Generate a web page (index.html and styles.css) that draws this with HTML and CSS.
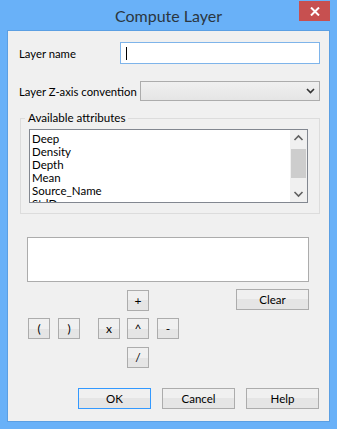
FILE: index.html
```html
<!DOCTYPE html>
<html lang="en">
<head>
    <meta charset="UTF-8">
    <meta name="viewport" content="width=device-width, initial-scale=1.0">
    <link rel="stylesheet" href="styles.css">
</head>
<body>
    <div class="window">
        <div class="titlebar">
            <div class="title">Compute Layer</div>
            <div class="close">
                <svg width="10" height="9" viewBox="0 0 10 9"><path d="M1 0.5 L9 8.5 M9 0.5 L1 8.5" stroke="#fff" stroke-width="2"/></svg>
            </div>
        </div>

        <div class="client">
            <div class="row row-name">
                <span class="label">Layer name</span>
                <div class="textbox"><span class="caret"></span></div>
            </div>

            <div class="row row-z">
                <span class="label">Layer Z-axis convention</span>
                <div class="combo">
                    <svg width="9" height="6" viewBox="0 0 9 6"><path d="M1 1 L4.5 4.5 L8 1" fill="none" stroke="#333" stroke-width="1.6"/></svg>
                </div>
            </div>

            <fieldset class="group">
                <legend>Available attributes</legend>
                <div class="listbox">
                    <ul class="items">
                        <li>Deep</li>
                        <li>Density</li>
                        <li>Depth</li>
                        <li>Mean</li>
                        <li>Source_Name</li>
                        <li>StdDev</li>
                    </ul>
                    <div class="scrollbar">
                        <svg class="arrow" width="17" height="17" viewBox="0 0 17 17"><path d="M4.5 10 L8.5 6 L12.5 10" fill="none" stroke="#606060" stroke-width="1.6"/></svg>
                        <div class="track"><div class="thumb"></div></div>
                        <svg class="arrow" width="17" height="17" viewBox="0 0 17 17"><path d="M4.5 7 L8.5 11 L12.5 7" fill="none" stroke="#606060" stroke-width="1.6"/></svg>
                    </div>
                </div>
            </fieldset>

            <div class="expression"></div>

            <div class="keys">
                <div class="keypad">
                    <span></span><span></span><span></span>
                    <button class="key">+</button>
                    <span></span>

                    <button class="key">(</button>
                    <button class="key">)</button>
                    <button class="key">x</button>
                    <button class="key">^</button>
                    <button class="key">-</button>

                    <span></span><span></span><span></span>
                    <button class="key">/</button>
                    <span></span>
                </div>
                <button class="btn clear">Clear</button>
            </div>

            <div class="actions">
                <button class="btn default">OK</button>
                <button class="btn">Cancel</button>
                <button class="btn">Help</button>
            </div>
        </div>
    </div>
</body>
</html>
```

FILE: styles.css
```css
body {
    margin: 0;
    font-family: Lato, "Noto Sans", Arial, sans-serif;
    font-size: 11.3px;
    color: #000;
}
.window {
    width: 337px;
    height: 429px;
    background-color: #69b1f8;
    display: flex;
    flex-direction: column;
    box-sizing: border-box;
}
.titlebar {
    height: 30px;
    display: grid;
    grid-template-columns: 1fr auto 1fr;
}
.title {
    grid-column: 2;
    font-size: 16px;
    color: #2b3640;
    line-height: 32px;
}
.close {
    grid-column: 3;
    justify-self: end;
    margin: 1px 7px 0 0;
    width: 31px;
    height: 20px;
    background-color: #c75050;
    display: flex;
    align-items: center;
    justify-content: center;
}
.client {
    margin: 0 7px 7px 7px;
    height: 390px;
    border: 1px solid #5b9fe3;
    background-color: #f0f0f0;
    display: flex;
    flex-direction: column;
}
.row {
    display: flex;
    align-items: center;
    padding: 0 9px 0 11px;
    white-space: nowrap;
}
.row-name {
    margin-top: 11px;
}
.textbox {
    margin-left: auto;
    width: 200px;
    height: 22px;
    box-sizing: border-box;
    border: 1px solid #7eb4ea;
    background: #fff;
    display: flex;
    align-items: center;
    padding-left: 5px;
}
.caret {
    width: 1px;
    height: 13px;
    background: #000;
}
.row-z {
    margin-top: 17px;
}
.combo {
    margin-left: auto;
    width: 180px;
    height: 20px;
    box-sizing: border-box;
    border: 1px solid #acacac;
    background: linear-gradient(#f0f0f0, #e5e5e5);
    display: flex;
    align-items: center;
    justify-content: flex-end;
    padding-right: 4px;
}
.group {
    margin: 9px 9px 0 12px;
    padding: 3px 11px 11px 8px;
    border: 1px solid #dcdcdc;
    height: 104px;
    box-sizing: border-box;
}
.group legend {
    padding: 0 3px;
    margin-left: -4px;
    line-height: 16px;
    font-size: 11.6px;
}
.listbox {
    height: 74px;
    box-sizing: border-box;
    border: 1px solid #828790;
    background: #fff;
    display: flex;
    overflow: hidden;
}
.items {
    list-style: none;
    margin: 0;
    padding: 2px 0 0 2px;
    flex: 1;
    line-height: 13px;
    font-size: 11.5px;
}
.scrollbar {
    width: 17px;
    background: #f0f0f0;
    display: flex;
    flex-direction: column;
}
.track {
    flex: 1;
    padding-top: 2px;
}
.thumb {
    width: 15px;
    height: 29px;
    margin-left: 1px;
    background: #cdcdcd;
}
.expression {
    margin: 23px 0 0 19px;
    width: 282px;
    height: 45px;
    box-sizing: border-box;
    border: 1px solid #acacac;
    background: #fff;
}
.keys {
    display: flex;
    align-items: flex-start;
    margin-top: 7px;
    padding-left: 20px;
}
.keypad {
    display: grid;
    grid-template-columns: 30px 40px 29px 30px 22px;
    grid-template-rows: 28px 29px 20px;
    margin-top: 1px;
}
button {
    font-family: Lato, "Noto Sans", Arial, sans-serif;
    font-size: 11.5px;
    color: #000;
    border: 1px solid #acacac;
    background: linear-gradient(#f0f0f0 0%, #f0f0f0 50%, #e5e5e5 50%, #e5e5e5 100%);
    padding: 0;
    margin: 0;
}
.key {
    width: 22px;
    height: 21px;
    font-size: 12px;
}
.clear {
    margin-left: auto;
    margin-right: 20px;
}
.btn {
    width: 73px;
    height: 21px;
}
.actions {
    margin-top: auto;
    margin-bottom: 12px;
    display: flex;
    justify-content: flex-end;
    gap: 11px;
    padding-right: 10px;
}
.default {
    border-color: #3399ff;
}
```
